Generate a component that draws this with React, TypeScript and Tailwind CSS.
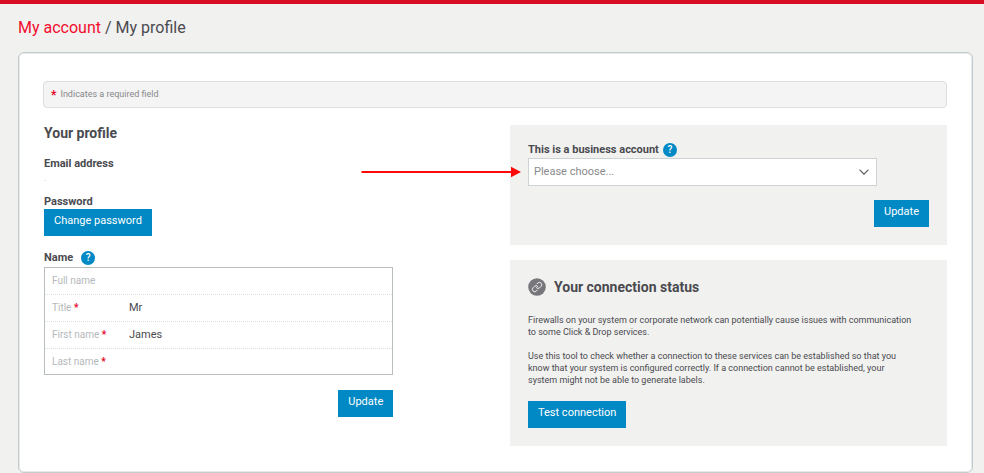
import { useState } from "react";
import type { ReactNode } from "react";

type NameField = {
  id: string;
  label: string;
  required: boolean;
};

const NAME_FIELDS: NameField[] = [
  { id: "fullName", label: "Full name", required: false },
  { id: "title", label: "Title", required: true },
  { id: "firstName", label: "First name", required: true },
  { id: "lastName", label: "Last name", required: true },
];

function Button({ children }: { children: ReactNode }) {
  return (
    <button
      type="button"
      className="block h-[27px] bg-[#0089c4] px-[10px] pb-[3px] text-[11px] leading-4 text-white"
    >
      {children}
    </button>
  );
}

function HelpButton({ label }: { label: string }) {
  return (
    <button
      type="button"
      aria-label={label}
      className="flex size-[14px] items-center justify-center rounded-full bg-[#0089c4] text-[10px] leading-none font-medium text-white"
    >
      ?
    </button>
  );
}

function LinkIcon() {
  return (
    <svg viewBox="0 0 18 18" className="size-[18px]" fill="none">
      <circle cx="9" cy="9" r="8.8" fill="#77777b" />
      <g
        stroke="#f6f6f5"
        strokeWidth="2"
        strokeLinecap="round"
        strokeLinejoin="round"
        transform="translate(3.4 3.4) scale(0.47)"
      >
        <path d="M10 13a5 5 0 0 0 7.54.54l3-3a5 5 0 0 0-7.07-7.07l-1.72 1.71" />
        <path d="M14 11a5 5 0 0 0-7.54-.54l-3 3a5 5 0 0 0 7.07 7.07l1.71-1.71" />
      </g>
    </svg>
  );
}

function ProfileForm() {
  const [values, setValues] = useState<Record<string, string>>({
    fullName: "",
    title: "Mr",
    firstName: "James",
    lastName: "",
  });

  return (
    <section className="w-3/4 pl-px">
      <h2 className="text-[14px] leading-4 font-bold">Your profile</h2>

      <h3 className="mt-4 text-[11px] leading-[14px] font-bold">
        Email address
      </h3>
      <p className="h-6 text-[9px] leading-[14px] text-[#cccccc]">.</p>

      <h3 className="text-[11px] leading-[14px] font-bold">Password</h3>
      <Button>Change password</Button>

      <div className="mt-[15px] flex items-center gap-2">
        <h3 className="text-[11px] leading-[14px] font-bold">Name</h3>
        <HelpButton label="Help with name" />
      </div>
      <div className="mt-[2px] border border-[#b9bec0]">
        {NAME_FIELDS.map((field) => (
          <div
            key={field.id}
            className="flex h-[27px] items-center border-b border-dotted border-[#dcdfe0] pl-[7px] last:h-[25px] last:border-b-0"
          >
            <label
              htmlFor={field.id}
              className="w-[77px] text-[10px] leading-3 text-[#b4b9bb]"
            >
              {field.label}
              {field.required && (
                <span className="font-bold text-[#e2001f]"> *</span>
              )}
            </label>
            <input
              id={field.id}
              value={values[field.id]}
              onChange={(e) =>
                setValues({ ...values, [field.id]: e.target.value })
              }
              className="min-w-0 flex-1 bg-transparent text-[11px] leading-4 outline-none"
            />
          </div>
        ))}
      </div>

      <div className="mt-[15px] flex justify-end">
        <Button>Update</Button>
      </div>
    </section>
  );
}

function BusinessPanel() {
  const [choice, setChoice] = useState("");

  return (
    <section className="relative bg-[#f1f1ef] p-[18px]">
      <div className="flex items-center gap-1">
        <label
          htmlFor="business"
          className="text-[11px] leading-[14px] font-bold"
        >
          This is a business account
        </label>
        <HelpButton label="Help with business accounts" />
      </div>
      <div className="relative mt-px w-[87%]">
        <select
          id="business"
          value={choice}
          onChange={(e) => setChoice(e.target.value)}
          className="block h-[28px] w-full appearance-none border border-[#cdd2d4] bg-white px-[5px] text-[11px] text-[#8a8a8d]"
        >
          <option value="">Please choose...</option>
          <option value="yes">Yes</option>
          <option value="no">No</option>
        </select>
        <svg
          viewBox="0 0 10 6"
          className="pointer-events-none absolute top-[11px] right-2 h-[6px] w-[10px]"
          fill="none"
          stroke="#66666a"
          strokeWidth="1.3"
        >
          <path d="M0.5 0.6 L5 5.2 L9.5 0.6" />
        </svg>
      </div>
      <div className="mt-[14px] flex justify-end">
        <Button>Update</Button>
      </div>

      {/* pointer to the drop-down */}
      <svg
        viewBox="0 0 160 12"
        className="pointer-events-none absolute top-[41px] -left-[149px] h-3 w-40"
      >
        <path d="M0.5 6 H151" stroke="#ff0a0a" strokeWidth="2" />
        <path d="M150 0.8 L160 6 L150 11.2 Z" fill="#ff0a0a" />
      </svg>
    </section>
  );
}

function ConnectionPanel() {
  return (
    <section className="bg-[#f1f1ef] p-[18px]">
      <div className="flex items-center gap-2">
        <LinkIcon />
        <h2 className="text-[14px] leading-[18px] font-bold">
          Your connection status
        </h2>
      </div>
      <p className="mt-[18px] text-[9px] leading-3">
        Firewalls on your system or corporate network can potentially cause
        issues with communication
        <br />
        to some Click &amp; Drop services.
      </p>
      <p className="mt-3 mb-[15px] text-[9px] leading-3">
        Use this tool to check whether a connection to these services can be
        established so that you
        <br />
        know that your system is configured correctly. If a connection cannot be
        established, your
        <br />
        system might not be able to generate labels.
      </p>
      <Button>Test connection</Button>
    </section>
  );
}

export default function App() {
  return (
    <div className="min-h-screen border-t-4 border-[#d90d23] bg-[#f1f1ef] pr-[11px] pl-[18px] font-['Roboto','Liberation_Sans',sans-serif] text-[#4a4a4f]">
      <h1 className="py-3 text-[16px] leading-6">
        <a href="#account" className="text-[#f20d2e]">
          My account
        </a>{" "}
        / My profile
      </h1>

      <main className="rounded-md border border-[#c3cbce] bg-white pt-7 pr-[25px] pb-[26px] pl-6 shadow-[inset_0_0_0_1px_#e6eaeb]">
        <p className="flex h-[27px] items-center gap-1 rounded-sm border border-[#dcdddd] bg-[#f4f4f4] px-[7px] text-[9px] text-[#88888b]">
          <span className="text-[12px] font-bold text-[#e2001f]">*</span>
          Indicates a required field
        </p>

        <div className="mt-[17px] grid grid-cols-[467fr_437fr]">
          <ProfileForm />
          <div className="flex flex-col gap-[15px]">
            <BusinessPanel />
            <ConnectionPanel />
          </div>
        </div>
      </main>
    </div>
  );
}
